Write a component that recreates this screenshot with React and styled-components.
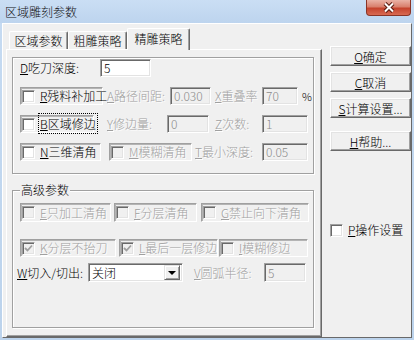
import React from "react";
import styled, { createGlobalStyle } from "styled-components";

const GlobalStyle = createGlobalStyle`
  html, body {
    margin: 0;
    padding: 0;
    background: #c3d8ef;
  }
  body {
    font-family: "Noto Sans CJK SC", "Liberation Sans", sans-serif;
    font-size: 12px;
    font-weight: 300;
    color: #000;
  }
  * {
    box-sizing: border-box;
  }
`;

const Window = styled.div`
  width: 414px;
  height: 340px;
  display: flex;
  flex-direction: column;
  background: linear-gradient(180deg, #c6dbf2 0%, #bcd3ec 100%);
`;

const TitleBar = styled.div`
  height: 23px;
  flex: none;
  display: flex;
  justify-content: space-between;
  align-items: flex-start;
  padding-left: 5px;
  background: linear-gradient(180deg, #cadef4 0%, #bdd4ee 100%);
`;

const Title = styled.div`
  line-height: 23px;
  font-size: 12px;
  color: #111;
`;

const CloseButton = styled.div`
  width: 45px;
  height: 16px;
  margin-right: 3px;
  display: flex;
  align-items: center;
  justify-content: center;
  border: 1px solid #8a3426;
  border-top: none;
  border-radius: 0 0 4px 4px;
  background: linear-gradient(
    180deg,
    #eab2a6 0%,
    #d9806d 45%,
    #c5432d 55%,
    #d86a52 100%
  );
`;

const Client = styled.div`
  flex: 1;
  margin: 0 2px 2px;
  display: flex;
  align-items: stretch;
  padding: 4px 0 0 3px;
  background: #f0f0f0;
  border: 1px solid;
  border-color: #fff #696969 #696969 #fff;
`;

const Tabs = styled.div`
  width: 316px;
  display: flex;
  flex-direction: column;
`;

const TabStrip = styled.div`
  height: 21px;
  display: flex;
  align-items: flex-end;
  padding-left: 3px;
  position: relative;
  z-index: 1;
`;

const Tab = styled.div`
  width: ${(p) => p.$w}px;
  height: ${(p) => (p.$active ? 22 : 18)}px;
  margin-bottom: ${(p) => (p.$active ? -1 : 0)}px;
  display: flex;
  align-items: center;
  justify-content: center;
  padding-bottom: ${(p) => (p.$active ? 3 : 0)}px;
  font-size: 12px;
  background: #f0f0f0;
  border: 1px solid;
  border-bottom: none;
  border-color: #fff #696969 #fff #fff;
  border-radius: 2px 2px 0 0;
  box-shadow: inset -1px 0 0 #a0a0a0;
`;

const Panel = styled.div`
  flex: 1;
  padding: 7px 0 0 5px;
  border: 1px solid;
  border-color: #fff #696969 #696969 #fff;
  box-shadow: inset -1px -1px 0 #a0a0a0;
`;

const Group = styled.div`
  width: 302px;
  height: 117px;
  padding: 1px 0 0 7px;
  display: flex;
  flex-direction: column;
  gap: 10px;
  border: 1px solid #a0a0a0;
  box-shadow: 1px 1px 0 #fff, inset 1px 1px 0 #fff;
`;

const FieldSet = styled.fieldset`
  width: 302px;
  height: 145px;
  margin: 9px 0 0 0;
  padding: 6px 0 0 7px;
  border: 1px solid #a0a0a0;
  box-shadow: 1px 1px 0 #fff, inset 1px 1px 0 #fff;
`;

const Legend = styled.legend`
  padding: 0 1px;
  margin-left: 0;
  line-height: 14px;
  font-size: 12px;
  background: #f0f0f0;
`;

const Rows = styled.div`
  display: flex;
  flex-direction: column;
`;

const Row = styled.div`
  height: ${(p) => p.$h || 18}px;
  margin-top: ${(p) => p.$mt || 0}px;
  display: flex;
  align-items: center;
`;

const Label = styled.div`
  width: ${(p) => (p.$w ? `${p.$w}px` : "auto")};
  margin-left: ${(p) => p.$ml || 0}px;
  white-space: nowrap;
  line-height: 14px;
  color: ${(p) => (p.$off ? "#a0a0a0" : "#000")};
  text-shadow: ${(p) => (p.$off ? "1px 1px 0 #fff" : "none")};
`;

const Field = styled.div`
  width: ${(p) => p.$w}px;
  height: 100%;
  padding-left: 3px;
  display: flex;
  align-items: center;
  line-height: 14px;
  color: ${(p) => (p.$off ? "#8c8c8c" : "#000")};
  background: ${(p) => (p.$off ? "#f0f0f0" : "#fff")};
  border: 1px solid;
  border-color: #a0a0a0 #fff #fff #a0a0a0;
  box-shadow: inset 1px 1px 0 #696969, inset -1px -1px 0 #e3e3e3;
`;

const CheckFrame = styled.div`
  width: ${(p) => p.$w}px;
  height: 100%;
  margin-left: ${(p) => p.$ml || 0}px;
  padding-left: 1px;
  display: flex;
  align-items: center;
  white-space: nowrap;
  border: 1px solid;
  border-color: #a0a0a0 #fff #fff #a0a0a0;
  box-shadow: inset 1px 1px 0 #b4b4b4;
`;

const Box = styled.div`
  width: 13px;
  height: 13px;
  flex: none;
  display: flex;
  align-items: center;
  justify-content: center;
  background: ${(p) => (p.$off ? "#f0f0f0" : "#fff")};
  border: 1px solid;
  border-color: #a0a0a0 #fff #fff #a0a0a0;
  box-shadow: inset 1px 1px 0 #696969, inset -1px -1px 0 #e3e3e3;
`;

const CheckText = styled.span`
  margin-left: 5px;
  line-height: 14px;
  color: ${(p) => (p.$off ? "#a0a0a0" : "#000")};
  text-shadow: ${(p) => (p.$off ? "1px 1px 0 #fff" : "none")};
`;

const Focus = styled.span`
  outline: 1px dotted #000;
  outline-offset: 1px;
`;

const Dropdown = styled.div`
  width: ${(p) => p.$w}px;
  height: 100%;
  padding: 0 2px 0 3px;
  display: flex;
  align-items: center;
  justify-content: space-between;
  background: #fff;
  border: 1px solid;
  border-color: #a0a0a0 #fff #fff #a0a0a0;
  box-shadow: inset 1px 1px 0 #696969, inset -1px -1px 0 #e3e3e3;
`;

const DropButton = styled.div`
  width: 16px;
  height: 15px;
  display: flex;
  align-items: center;
  justify-content: center;
  background: #f0f0f0;
  border: 1px solid;
  border-color: #e3e3e3 #696969 #696969 #e3e3e3;
  box-shadow: inset 1px 1px 0 #fff, inset -1px -1px 0 #a0a0a0;
`;

const Arrow = styled.div`
  width: 0;
  height: 0;
  border-left: 4px solid transparent;
  border-right: 4px solid transparent;
  border-top: 4px solid #000;
`;

const RightCol = styled.div`
  width: 81px;
  margin-left: 8px;
  padding-top: 18px;
  display: flex;
  flex-direction: column;
`;

const Button = styled.div`
  height: 20px;
  margin-top: ${(p) => p.$mt || 0}px;
  display: flex;
  align-items: center;
  justify-content: center;
  white-space: nowrap;
  font-size: 12px;
  background: #f0f0f0;
  border: 1px solid;
  border-color: #fff #696969 #696969 #fff;
  box-shadow: inset -1px -1px 0 #a0a0a0, inset 1px 1px 0 #e3e3e3;
`;

const SideCheck = styled.div`
  margin-top: 72px;
  display: flex;
  align-items: center;
`;

const Pct = styled.span`
  margin-left: 4px;
  font-size: 11px;
`;

const Tick = ({ off }) => (
  <svg width="9" height="8" viewBox="0 0 9 8">
    <polyline
      points="1,4 3.5,6.5 8,1.5"
      fill="none"
      stroke={off ? "#a0a0a0" : "#000"}
      strokeWidth="1.8"
    />
  </svg>
);

const Check = ({ k, text, w, ml, off, checked, focus }) => (
  <CheckFrame $w={w} $ml={ml}>
    <Box $off={off}>{checked && <Tick off={off} />}</Box>
    <CheckText $off={off}>
      {focus ? (
        <Focus>
          <u>{k}</u>
          {text}
        </Focus>
      ) : (
        <>
          <u>{k}</u>
          {text}
        </>
      )}
    </CheckText>
  </CheckFrame>
);

export default function App() {
  return (
    <>
      <GlobalStyle />
      <Window>
        <TitleBar>
          <Title>区域雕刻参数</Title>
          <CloseButton>
            <svg width="14" height="11" viewBox="0 0 14 11">
              <path d="M3 1.5 L11 9.5 M11 1.5 L3 9.5" stroke="#5a1b10" strokeWidth="4" />
              <path d="M3 1.5 L11 9.5 M11 1.5 L3 9.5" stroke="#fff" strokeWidth="2" />
            </svg>
          </CloseButton>
        </TitleBar>

        <Client>
          <Tabs>
            <TabStrip>
              <Tab $w={59}>区域参数</Tab>
              <Tab $w={59}>粗雕策略</Tab>
              <Tab $w={63} $active>
                精雕策略
              </Tab>
            </TabStrip>
            <Panel>
              <Group>
                <Row>
                  <Label $w={80}>
                    <u>D</u>吃刀深度:
                  </Label>
                  <Field $w={51}>5</Field>
                </Row>
                <Row>
                  <Check k="R" text="残料补加工" w={83} />
                  <Label $w={63} $ml={4} $off>
                    <u>A</u>路径间距:
                  </Label>
                  <Field $w={41} $off>
                    0.030
                  </Field>
                  <Label $w={47} $ml={4} $off>
                    <u>X</u>重叠率
                  </Label>
                  <Field $w={36} $off>
                    70
                  </Field>
                  <Pct>%</Pct>
                </Row>
                <Row>
                  <Check k="B" text="区域修边" w={74} focus />
                  <Label $w={60} $ml={13} $off>
                    <u>Y</u>修边量:
                  </Label>
                  <Field $w={42} $off>
                    0
                  </Field>
                  <Label $w={47} $ml={6} $off>
                    <u>Z</u>次数:
                  </Label>
                  <Field $w={46} $off>
                    1
                  </Field>
                </Row>
                <Row>
                  <Check k="N" text="三维清角" w={81} />
                  <Check k="M" text="模糊清角" w={83} ml={8} off />
                  <Label $w={67} $ml={3} $off>
                    <u>T</u>最小深度:
                  </Label>
                  <Field $w={46} $off>
                    0.05
                  </Field>
                </Row>
              </Group>

              <FieldSet>
                <Legend>高级参数</Legend>
                <Rows>
                  <Row $h={19}>
                    <Check k="E" text="只加工清角" w={91} off />
                    <Check k="F" text="分层清角" w={83} ml={3} off />
                    <Check k="G" text="禁止向下清角" w={108} ml={4} off />
                  </Row>
                  <Row $h={18} $mt={17}>
                    <Check k="K" text="分层不抬刀" w={96} off checked />
                    <Check k="L" text="最后一层修边" w={99} ml={3} off checked />
                    <Check k="I" text="模糊修边" w={89} ml={1} off />
                  </Row>
                  <Row $h={19} $mt={6}>
                    <Label $w={71} $ml={-3}>
                      <u>W</u>切入/切出:
                    </Label>
                    <Dropdown $w={95}>
                      <span>关闭</span>
                      <DropButton>
                        <Arrow />
                      </DropButton>
                    </Dropdown>
                    <Label $w={70} $ml={11} $off>
                      <u>V</u>圆弧半径:
                    </Label>
                    <Field $w={42} $off>
                      5
                    </Field>
                  </Row>
                </Rows>
              </FieldSet>
            </Panel>
          </Tabs>

          <RightCol>
            <Button>
              <u>O</u>确定
            </Button>
            <Button $mt={6}>
              <u>C</u>取消
            </Button>
            <Button $mt={6}>
              <u>S</u>计算设置...
            </Button>
            <Button $mt={13}>
              <u>H</u>帮助...
            </Button>
            <SideCheck>
              <Box />
              <CheckText>
                <u>P</u>操作设置
              </CheckText>
            </SideCheck>
          </RightCol>
        </Client>
      </Window>
    </>
  );
}
